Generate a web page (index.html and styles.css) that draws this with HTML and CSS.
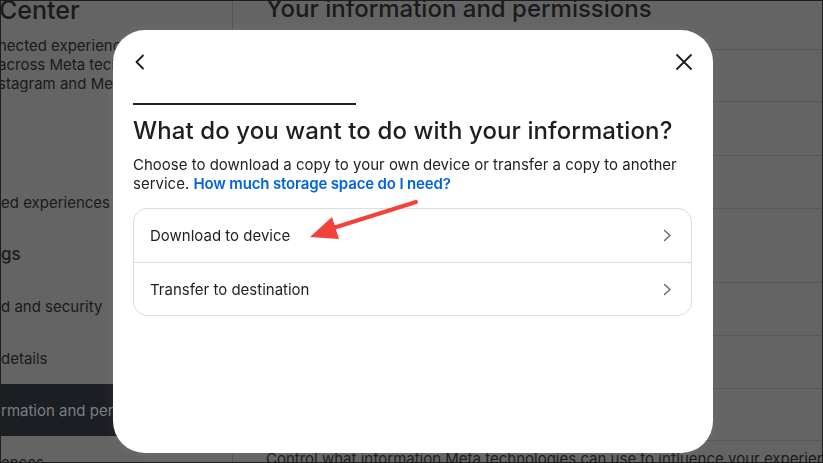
FILE: index.html
```html
<!DOCTYPE html>
<html lang="en">
<head>
<meta charset="utf-8">
<title>Your information and permissions</title>
<link rel="stylesheet" href="styles.css">
</head>
<body>
<div class="frame">
  <aside class="sidebar">
    <div class="side-title">Center</div>
    <p class="side-desc">nected experiences and account settings<br>across Meta technologies like Facebook,<br>stagram and Messenger.</p>
    <div class="side-item first">ed experiences</div>
    <div class="side-head">gs</div>
    <div class="side-item">d and security</div>
    <div class="side-item">details</div>
    <div class="side-item selected">rmation and permissions</div>
    <div class="side-item">ences</div>
  </aside>
  <main class="content">
    <h1 class="main-title">Your information and permissions</h1>
    <div class="rows">
      <div class="row r1"></div>
      <div class="row r2"></div>
      <div class="row r3"></div>
      <div class="row r4"></div>
      <div class="row r5"></div>
      <div class="row r6"></div>
      <div class="row r7"></div>
      <div class="row r8"></div>
    </div>
    <p class="main-foot">Control what information Meta technologies can use to influence your experiences</p>
  </main>
</div>

<div class="modal" role="dialog">
  <div class="modal-head">
    <button class="icon-btn" aria-label="Back">
      <svg width="14" height="16" viewBox="0 0 14 16"><path d="M10 1.5 L3.5 8 L10 14.5" fill="none" stroke="#1c1e21" stroke-width="1.8" stroke-linecap="round" stroke-linejoin="round"/></svg>
    </button>
    <button class="icon-btn" aria-label="Close">
      <svg width="18" height="18" viewBox="0 0 18 18"><path d="M2 2 L16 16 M16 2 L2 16" fill="none" stroke="#1c1e21" stroke-width="1.8" stroke-linecap="round"/></svg>
    </button>
  </div>
  <div class="modal-body">
    <div class="progress"></div>
    <h2 class="q-title">What do you want to do with your information?</h2>
    <p class="q-desc">Choose to download a copy to your own device or transfer a copy to another service. <a href="#" class="link">How much storage space do I need?</a></p>
    <div class="options">
      <div class="option">
        <span>Download to device</span>
        <svg width="9" height="13" viewBox="0 0 9 13"><path d="M1.5 1.5 L7 6.5 L1.5 11.5" fill="none" stroke="#65676b" stroke-width="1.4" stroke-linecap="round" stroke-linejoin="round"/></svg>
      </div>
      <div class="option">
        <span>Transfer to destination</span>
        <svg width="9" height="13" viewBox="0 0 9 13"><path d="M1.5 1.5 L7 6.5 L1.5 11.5" fill="none" stroke="#65676b" stroke-width="1.4" stroke-linecap="round" stroke-linejoin="round"/></svg>
      </div>
    </div>
  </div>
</div>

<svg class="annot" width="823" height="463" viewBox="0 0 823 463">
  <line x1="416" y1="202" x2="330" y2="229" stroke="#f2423a" stroke-width="4" stroke-linecap="round"/>
  <polygon points="310,237 332,217 339,239" fill="#f2423a"/>
</svg>
</body>
</html>
```

FILE: styles.css
```css
* { box-sizing: border-box; }
html, body {
  margin: 0;
  padding: 0;
  width: 823px;
  height: 463px;
  overflow: hidden;
  background: #646464;
  font-family: Inter, "Noto Sans", "Liberation Sans", sans-serif;
}
.frame {
  width: 823px;
  height: 463px;
  border: 1px solid #1e1e1e;
  display: flex;
  overflow: hidden;
  background: #646464;
  color: #1a1a1a;
}
.sidebar {
  width: 232px;
  flex: none;
  border-right: 1px solid #555;
  display: flex;
  flex-direction: column;
  overflow: hidden;
  white-space: nowrap;
}
.side-title {
  font-size: 25px;
  font-weight: 500;
  line-height: 30px;
  margin-top: -6px;
  margin-left: -2px;
}
.side-desc {
  margin: 11px 0 0 -3px;
  font-size: 15px;
  line-height: 19px;
}
.side-item {
  font-size: 15px;
  height: 52px;
  display: flex;
  align-items: center;
  flex: none;
}
.side-item.first { margin-top: 83px; }
.side-head {
  font-size: 17px;
  font-weight: 500;
  height: 52px;
  display: flex;
  align-items: center;
  flex: none;
}
.side-item.selected {
  background: #1b1e22;
  color: #7b7e82;
}
.content {
  flex: 1;
  padding-left: 33px;
  overflow: hidden;
}
.main-title {
  margin: -7px 0 0 0;
  font-size: 24px;
  font-weight: 500;
  line-height: 30px;
  white-space: nowrap;
}
.rows {
  margin-left: -33px;
  margin-top: 25px;
  display: flex;
  flex-direction: column;
}
.row { border-top: 1px solid #575757; }
.r1 { height: 52px; }
.r2 { height: 54px; }
.r3 { height: 53px; }
.r4 { height: 74px; }
.r5 { height: 53px; }
.r6 { height: 53px; }
.r7 { height: 52px; }
.r8 { height: 10px; }
.main-foot {
  margin: 0;
  font-size: 15px;
  line-height: 18px;
  white-space: nowrap;
}
.modal {
  position: fixed;
  left: 113px;
  top: 30px;
  width: 600px;
  height: 423px;
  background: #fff;
  border-radius: 32px;
  box-shadow: 0 0 18px rgba(255,255,255,0.06);
  color: #1c1e21;
}
.modal-head {
  height: 63px;
  display: flex;
  align-items: center;
  justify-content: space-between;
  padding: 0 17px 0 15px;
}
.icon-btn {
  border: 0;
  background: none;
  padding: 0;
  width: 24px;
  height: 24px;
  display: flex;
  align-items: center;
  justify-content: center;
  cursor: pointer;
}
.modal-body {
  padding: 0 21px 0 20px;
  display: flex;
  flex-direction: column;
}
.progress {
  width: 223px;
  height: 2px;
  background: #1c1e21;
  margin-top: 10px;
}
.q-title {
  margin: 11px 0 0 0;
  font-size: 24px;
  font-weight: 500;
  line-height: 30px;
  letter-spacing: 0.1px;
  white-space: nowrap;
}
.q-desc {
  margin: 9px 0 0 0;
  font-size: 15px;
  line-height: 19px;
  color: #1c1e21;
}
.link {
  color: #0064e0;
  font-weight: 600;
  letter-spacing: -0.15px;
  text-decoration: none;
}
.options {
  margin-top: 15px;
  border: 1px solid #dadde1;
  border-radius: 14px;
  display: flex;
  flex-direction: column;
}
.option {
  height: 53px;
  display: flex;
  align-items: center;
  justify-content: space-between;
  padding: 0 19px 0 16px;
  font-size: 15px;
  color: #1c1e21;
}
.option + .option { border-top: 1px solid #dadde1; }
.annot {
  position: fixed;
  left: 0;
  top: 0;
  pointer-events: none;
}
```
